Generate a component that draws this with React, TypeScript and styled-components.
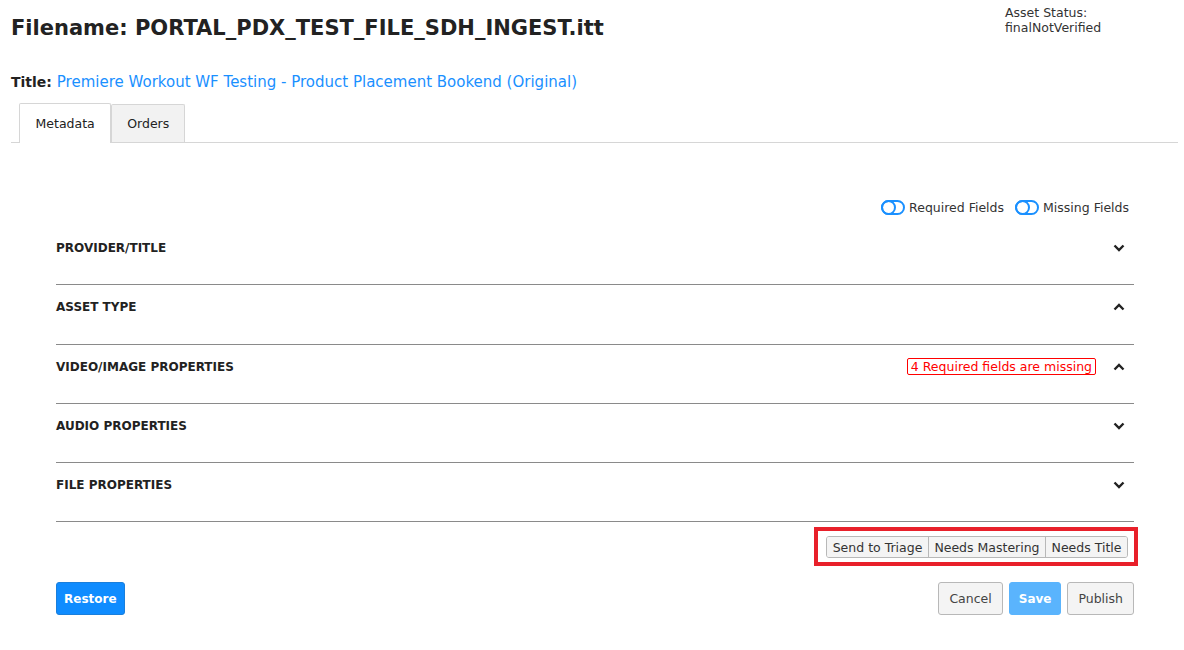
import styled, { createGlobalStyle } from 'styled-components';

const GlobalStyle = createGlobalStyle`
    body {
        margin: 0;
        background: #fff;
        font-family: "DejaVu Sans", "Liberation Sans", sans-serif;
        color: #222;
    }
`;

const Page = styled.div`
    padding: 0 6px 0 11px;
`;

const Header = styled.div`
    display: flex;
    justify-content: space-between;
    align-items: flex-start;
    height: 66px;
`;

const Filename = styled.h1`
    margin: 16px 0 0;
    font-size: 21px;
    font-weight: 600;
    color: #222;
`;

const AssetStatus = styled.div`
    width: 173px;
    margin-top: 5px;
    font-size: 12.5px;
    line-height: 15px;
    color: #333;
`;

const TitleLine = styled.div`
    font-size: 15px;
    line-height: 20px;
    margin-top: 6px;
`;

const TitleLabel = styled.span`
    font-size: 14px;
    font-weight: 700;
`;

const TitleLink = styled.a`
    color: #1a90ff;
    text-decoration: none;
`;

const Tabs = styled.div`
    display: flex;
    align-items: flex-end;
    margin-top: 11px;
    padding-left: 8px;
    border-bottom: 1px solid #d6d6d6;
`;

const Tab = styled.div<{ $active?: boolean }>`
    display: flex;
    align-items: center;
    justify-content: center;
    padding: 0 ${p => (p.$active ? '15.5px' : '15px')};
    height: ${p => (p.$active ? '39px' : '37px')};
    font-size: 12.5px;
    color: #222;
    background: ${p => (p.$active ? '#fff' : '#f2f2f2')};
    border: 1px solid #d6d6d6;
    border-bottom: none;
    margin-bottom: ${p => (p.$active ? '-1px' : '0')};
    border-radius: 2px 2px 0 0;
`;

const Panel = styled.div`
    padding: 57px 44px 0 45px;
`;

const ToggleBar = styled.div`
    display: flex;
    justify-content: flex-end;
    gap: 11px;
    padding-right: 5px;
    font-size: 12.5px;
    color: #333;
`;

const ToggleItem = styled.label`
    display: flex;
    align-items: center;
    gap: 4px;
`;

const ToggleTrack = styled.span`
    position: relative;
    width: 20px;
    height: 11px;
    border: 2px solid #1a90ff;
    border-radius: 8px;
`;

const ToggleKnob = styled.span`
    position: absolute;
    left: -2px;
    top: -2px;
    width: 11px;
    height: 11px;
    border: 2px solid #1a90ff;
    border-radius: 50%;
`;

const Accordion = styled.div`
    margin-top: 11px;
`;

const Row = styled.div`
    display: flex;
    align-items: flex-start;
    justify-content: space-between;
    height: 59.3px;
    padding-top: 14px;
    box-sizing: border-box;
    border-bottom: 1px solid #8a8a8a;
`;

const RowTitle = styled.div`
    font-size: 12px;
    font-weight: 700;
    color: #222;
    line-height: 16px;
`;

const RowRight = styled.div`
    display: flex;
    align-items: center;
    height: 16px;
    gap: 17px;
    padding-right: 9px;
`;

const MissingBadge = styled.span`
    font-size: 12.5px;
    line-height: 15px;
    color: #f00;
    border: 1px solid #f00;
    border-radius: 2px;
    padding: 0 3px;
`;

const ActionWrap = styled.div`
    display: flex;
    justify-content: flex-end;
    margin: 5px -4px 0 0;
`;

const Highlight = styled.div`
    border: 4px solid #e8202a;
    padding: 5px 6px 4px 8px;
`;

const ButtonGroup = styled.div`
    display: flex;
    border: 1px solid #b8b8b8;
    border-radius: 3px;
    overflow: hidden;
`;

const GroupButton = styled.button`
    font-family: inherit;
    font-size: 12.5px;
    height: 20px;
    padding: 0 5.5px;
    background: #f4f4f4;
    color: #333;
    border: none;
    border-left: 1px solid #b8b8b8;
    &:first-child {
        border-left: none;
    }
`;

const Footer = styled.div`
    display: flex;
    justify-content: space-between;
    margin-top: 16px;
`;

const FooterRight = styled.div`
    display: flex;
    gap: 6px;
`;

const Button = styled.button<{ $variant?: 'primary' | 'light' | 'default' }>`
    font-family: inherit;
    font-size: ${p => (p.$variant ? '12px' : '12.5px')};
    height: 33px;
    padding: 0 ${p => (p.$variant === 'primary' ? '7px' : p.$variant === 'light' ? '9px' : '10px')};
    border-radius: 3px;
    border: 1px solid ${p => (p.$variant === 'primary' ? '#1a7fdc' : p.$variant === 'light' ? '#5ab4fd' : '#b8b8b8')};
    background: ${p => (p.$variant === 'primary' ? '#0f8cff' : p.$variant === 'light' ? '#5ab4fd' : '#f4f4f4')};
    color: ${p => (p.$variant ? '#fff' : '#444')};
    font-weight: ${p => (p.$variant ? 700 : 400)};
`;

function Chevron({ up }: { up?: boolean }) {
    return (
        <svg width="12" height="8" viewBox="0 0 12 8">
            <path
                d={up ? 'M1.5 6.5 L6 2 L10.5 6.5' : 'M1.5 1.5 L6 6 L10.5 1.5'}
                fill="none"
                stroke="#222"
                strokeWidth="2.4"
            />
        </svg>
    );
}

function Toggle({ label }: { label: string }) {
    return (
        <ToggleItem>
            <ToggleTrack>
                <ToggleKnob />
            </ToggleTrack>
            {label}
        </ToggleItem>
    );
}

const sections = [
    { name: 'PROVIDER/TITLE', open: false },
    { name: 'ASSET TYPE', open: true },
    { name: 'VIDEO/IMAGE PROPERTIES', open: true, missing: 4 },
    { name: 'AUDIO PROPERTIES', open: false },
    { name: 'FILE PROPERTIES', open: false },
];

export default function App() {
    return (
        <>
            <GlobalStyle />
            <Page>
                <Header>
                    <Filename>Filename: PORTAL_PDX_TEST_FILE_SDH_INGEST.itt</Filename>
                    <AssetStatus>
                        Asset Status:
                        <br />
                        finalNotVerified
                    </AssetStatus>
                </Header>
                <TitleLine>
                    <TitleLabel>Title: </TitleLabel>
                    <TitleLink href="#">Premiere Workout WF Testing - Product Placement Bookend (Original)</TitleLink>
                </TitleLine>
                <Tabs>
                    <Tab $active>Metadata</Tab>
                    <Tab>Orders</Tab>
                </Tabs>
                <Panel>
                    <ToggleBar>
                        <Toggle label="Required Fields" />
                        <Toggle label="Missing Fields" />
                    </ToggleBar>
                    <Accordion>
                        {sections.map(s => (
                            <Row key={s.name}>
                                <RowTitle>{s.name}</RowTitle>
                                <RowRight>
                                    {s.missing && <MissingBadge>{s.missing} Required fields are missing</MissingBadge>}
                                    <Chevron up={s.open} />
                                </RowRight>
                            </Row>
                        ))}
                    </Accordion>
                    <ActionWrap>
                        <Highlight>
                            <ButtonGroup>
                                <GroupButton>Send to Triage</GroupButton>
                                <GroupButton>Needs Mastering</GroupButton>
                                <GroupButton>Needs Title</GroupButton>
                            </ButtonGroup>
                        </Highlight>
                    </ActionWrap>
                    <Footer>
                        <Button $variant="primary">Restore</Button>
                        <FooterRight>
                            <Button>Cancel</Button>
                            <Button $variant="light">Save</Button>
                            <Button>Publish</Button>
                        </FooterRight>
                    </Footer>
                </Panel>
            </Page>
        </>
    );
}
